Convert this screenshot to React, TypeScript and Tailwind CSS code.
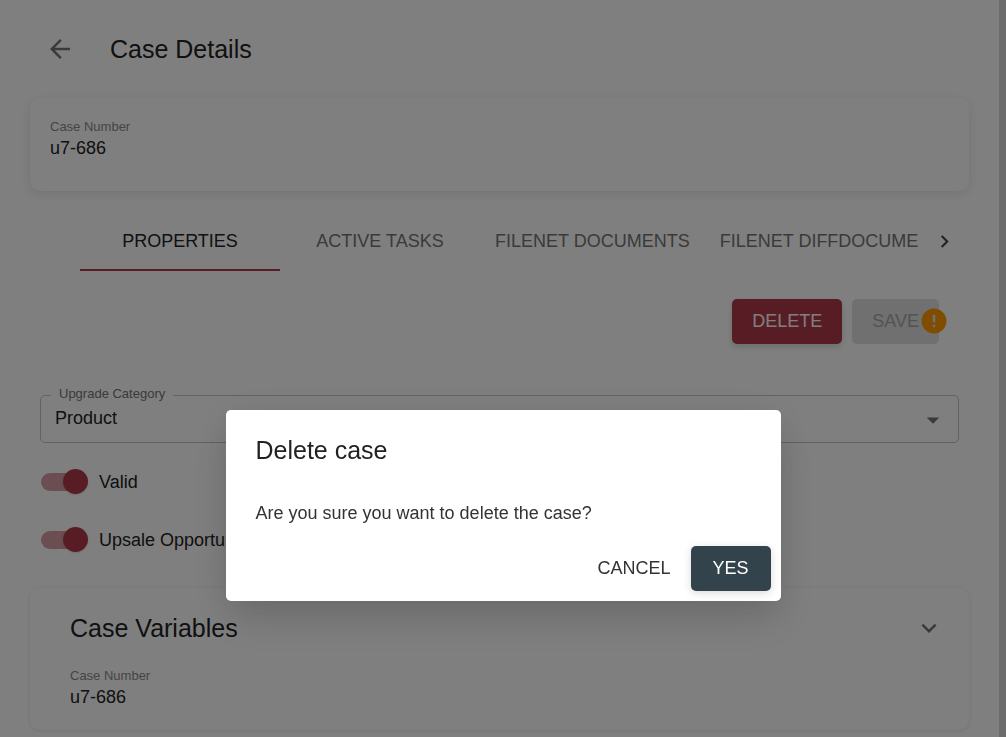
import { useState } from 'react';
import type { ReactNode } from 'react';
import {
  MdArrowBack,
  MdArrowDropDown,
  MdError,
  MdKeyboardArrowDown,
  MdKeyboardArrowRight,
} from 'react-icons/md';

const tabs = ['PROPERTIES', 'ACTIVE TASKS', 'FILENET DOCUMENTS', 'FILENET DIFFDOCUMENTS'];

function Field({ label, value }: { label: string; value: string }) {
  return (
    <dl>
      <dt className="text-[13px] leading-5 text-[#8a8a8a]">{label}</dt>
      <dd className="text-[18px] leading-[22px] text-[#222222]">{value}</dd>
    </dl>
  );
}

function Card({ className, children }: { className: string; children: ReactNode }) {
  return <section className={'rounded-[10px] bg-white ' + className}>{children}</section>;
}

function Switch({ id, label }: { id: string; label: string }) {
  return (
    <div className="flex h-[58px] items-center gap-[15px] pl-[11px]">
      <input
        id={id}
        type="checkbox"
        role="switch"
        defaultChecked
        className="relative h-[18px] w-[43px] shrink-0 appearance-none rounded-full bg-[#c4c4c4] checked:bg-[#d79ca3] after:absolute after:-top-1 after:-left-1 after:size-[25px] after:rounded-full after:bg-white after:shadow-sm checked:after:left-[22px] checked:after:bg-[#b03a48]"
      />
      <label htmlFor={id} className="text-[18px] leading-6 text-[#222222]">
        {label}
      </label>
    </div>
  );
}

function DeleteDialog({ onClose }: { onClose: () => void }) {
  return (
    <div className="fixed inset-0 flex items-start justify-center bg-black/50 pt-[410px]">
      <div
        role="dialog"
        aria-modal="true"
        aria-labelledby="dialog-title"
        className="w-full max-w-[555px] rounded-[5px] bg-white shadow-[0_20px_40px_rgba(0,0,0,0.12),0_4px_40px_rgba(0,0,0,0.08)]"
      >
        <h2 id="dialog-title" className="px-[30px] pt-5 pb-5 text-[25px] leading-10 text-[#222222]">
          Delete case
        </h2>
        <p className="px-[30px] pt-[11px] pb-5 text-[18px] leading-6 text-[#333333]">
          Are you sure you want to delete the case?
        </p>
        <div className="flex justify-end gap-[10px] px-[10px] pt-px pb-[10px]">
          <button
            type="button"
            onClick={onClose}
            className="h-[45px] rounded-[5px] px-[10px] text-[18px] text-[#333333]"
          >
            CANCEL
          </button>
          <button
            type="button"
            onClick={onClose}
            className="h-[45px] w-20 rounded-[5px] bg-[#33434b] text-[18px] font-medium text-white shadow-[0_2px_8px_rgba(0,0,0,0.15)]"
          >
            YES
          </button>
        </div>
      </div>
    </div>
  );
}

export default function App() {
  const [open, setOpen] = useState(true);
  const [active, setActive] = useState(0);

  return (
    <div className="flex min-h-screen bg-white font-['Liberation_Sans',Arial,sans-serif]">
      <main className="min-w-0 flex-1 px-[30px] pt-6 pb-[7px]">
        <header className="flex h-[50px] items-center gap-[35px] pl-[15px]">
          <button type="button" aria-label="Back" className="text-[#757575]">
            <MdArrowBack size={30} />
          </button>
          <h1 className="text-[25px] leading-10 text-[#222222]">Case Details</h1>
        </header>

        <Card className="mt-6 h-[93px] px-5 pt-[19px] shadow-[0_3px_12px_rgba(0,0,0,0.1)]">
          <Field label="Case Number" value="u7-686" />
        </Card>

        <nav className="mt-5 flex h-[60px] pl-[50px]">
          <div role="tablist" className="flex min-w-0 flex-1 overflow-hidden">
            {tabs.map((tab, index) => (
              <button
                key={tab}
                type="button"
                role="tab"
                aria-selected={index === active}
                onClick={() => setActive(index)}
                className={
                  index === active
                    ? 'min-w-[200px] shrink-0 border-b-2 border-[#b03a48] px-[15px] pt-0.5 text-[18px] text-[#222222]'
                    : 'min-w-[200px] shrink-0 border-b-2 border-transparent px-[15px] pt-0.5 text-[18px] text-[#757575]'
                }
              >
                {tab}
              </button>
            ))}
          </div>
          <button
            type="button"
            aria-label="Next tabs"
            className="flex w-[50px] items-center justify-center text-[#444444]"
          >
            <MdKeyboardArrowRight size={25} />
          </button>
        </nav>

        <div className="mt-7 flex justify-end gap-[10px] pr-[30px]">
          <button
            type="button"
            onClick={() => setOpen(true)}
            className="h-[45px] rounded-[5px] bg-[#b03a48] px-5 text-[18px] font-medium text-white shadow-[0_3px_6px_rgba(0,0,0,0.15)]"
          >
            DELETE
          </button>
          <div className="relative">
            <button
              type="button"
              disabled
              className="h-[45px] rounded-[5px] bg-[#e0e0e0] px-5 text-[18px] font-medium text-[#a6a6a6]"
            >
              SAVE
            </button>
            <MdError size={30} className="absolute top-[7px] -right-[10px] text-[#ff9800]" />
          </div>
        </div>

        <div className="px-[10px] pt-10">
          <fieldset className="relative rounded-[5px] border border-[#c4c4c4]">
            <legend className="ml-[10px] h-[22px] px-2 text-[13px] leading-5 text-[#757575]">
              <label htmlFor="upgrade-category">Upgrade Category</label>
            </legend>
            <select
              id="upgrade-category"
              className="block h-9 w-full appearance-none bg-transparent pr-12 pb-3 pl-[14px] text-[18px] leading-6 text-[#222222]"
            >
              <option>Product</option>
            </select>
            <MdArrowDropDown
              size={30}
              className="pointer-events-none absolute right-[10px] bottom-[7px] text-[#757575]"
            />
          </fieldset>
        </div>

        <div className="pt-[10px]">
          <Switch id="valid" label="Valid" />
          <Switch id="upsale" label="Upsale Opportunity" />
        </div>

        <Card className="mt-[19px] h-[142px] px-5 pt-5 shadow-[0_1px_5px_rgba(0,0,0,0.1)]">
          <div className="flex items-center justify-between px-5">
            <h2 className="text-[25px] leading-10 text-[#222222]">Case Variables</h2>
            <button type="button" aria-label="Collapse" className="-mr-[15px] text-[#757575]">
              <MdKeyboardArrowDown size={30} />
            </button>
          </div>
          <div className="px-5 pt-[18px]">
            <Field label="Case Number" value="u7-686" />
          </div>
        </Card>
      </main>
      <div className="w-[7px] shrink-0 bg-[#d8d8d8]" />

      {open && <DeleteDialog onClose={() => setOpen(false)} />}
    </div>
  );
}
